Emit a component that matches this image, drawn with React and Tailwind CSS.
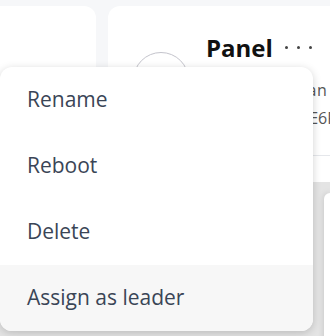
export default function App() {
  const items = ["Rename", "Reboot", "Delete", "Assign as leader"];

  return (
    <div
      className="relative w-[330px] h-[336px] overflow-hidden bg-[#f6f7f9]"
      style={{ fontFamily: '"Open Sans", "Noto Sans", sans-serif' }}
    >
      <div className="flex gap-3 pt-[6px]">
        {/* carte de gauche */}
        <div className="-ml-5 w-[116px] h-[176px] shrink-0 rounded-xl bg-white" />

        {/* carte Panel */}
        <div className="flex-1 -mr-10 rounded-tl-xl bg-white">
          <div className="flex h-[150px] pl-[25px] pt-[27px] border-b border-[#e5e7eb]">
            <div className="mt-[19px] h-14 w-14 shrink-0 rounded-full border border-[#c4c4cc]" />
            <div className="ml-[17px] flex flex-col">
              <div className="flex items-center">
                <span className="text-[24px] leading-[30px] font-bold text-[#111111]">
                  Panel
                </span>
                <div className="ml-[12px] mt-[-2px] flex gap-[9px]">
                  <span className="h-[3px] w-[3px] rounded-full bg-[#444]" />
                  <span className="h-[3px] w-[3px] rounded-full bg-[#444]" />
                  <span className="h-[3px] w-[3px] rounded-full bg-[#444]" />
                </div>
              </div>
              <p className="mt-[13px] whitespace-nowrap text-[16px] leading-[28px] tracking-[0.5px] text-[#555]">
                Location: Japan
              </p>
              <p className="whitespace-nowrap text-[16px] leading-[28px] text-[#555]">
                ID: A4C3B2D1E6F81
              </p>
            </div>
          </div>
          <div className="h-[26px]" />
        </div>
      </div>

      {/* zone grise du bas */}
      <div className="h-[200px] bg-[#e4e4e4] pl-[324px] pt-[11px]">
        <div className="h-[160px] rounded-tl-xl bg-white shadow-[0_0_6px_rgba(0,0,0,0.15)]" />
      </div>

      {/* menu */}
      <div className="absolute left-0 top-[67px] w-[313px] overflow-hidden rounded-xl bg-white shadow-[0_2px_8px_rgba(0,0,0,0.18)]">
        {items.map((item, i) => (
          <div
            key={item}
            className={
              "flex h-[66px] items-center pl-[27px] text-[21px] text-[#3a4556] " +
              (i === items.length - 1 ? "bg-[#f7f7f7]" : "")
            }
          >
            {item}
          </div>
        ))}
      </div>
    </div>
  );
}
